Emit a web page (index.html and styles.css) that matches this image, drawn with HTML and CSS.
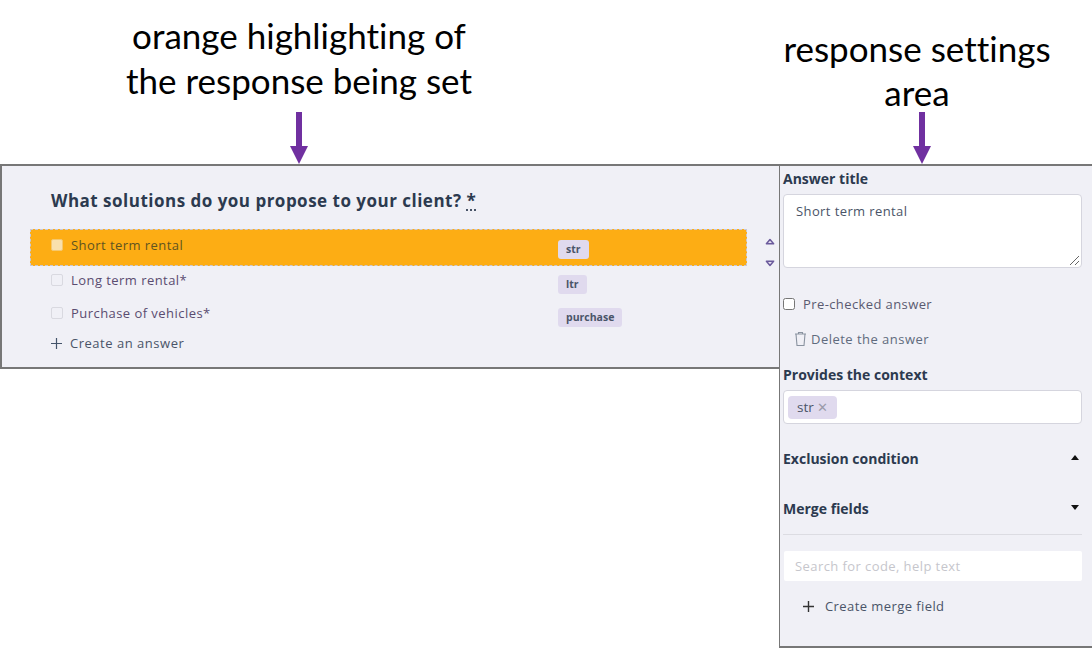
FILE: index.html
```html
<!DOCTYPE html>
<html lang="en">
<head>
<meta charset="utf-8">
<title>Response settings</title>
<link rel="stylesheet" href="styles.css">
</head>
<body>
<div class="page">
  <header class="notes">
    <div class="note note-left">
      <p class="note-text">orange highlighting of<br>the response being set</p>
      <svg class="arrow" width="18" height="52" viewBox="0 0 18 52"><path d="M6 0h6v34h6l-9 18-9-18h6z" fill="#7030a0"/></svg>
    </div>
    <div class="note note-right">
      <p class="note-text">response settings<br>area</p>
      <svg class="arrow" width="18" height="52" viewBox="0 0 18 52"><path d="M6 0h6v34h6l-9 18-9-18h6z" fill="#7030a0"/></svg>
    </div>
  </header>
  <main class="panels">
    <section class="question">
      <h1 class="q-title">What solutions do you propose to your client? <span class="req">*</span></h1>
      <div class="answers">
        <div class="answer answer-active">
          <span class="box"></span><span class="answer-label">Short term rental</span>
          <span class="tag">str</span>
        </div>
        <div class="answer answer-2">
          <span class="box"></span><span class="answer-label">Long term rental*</span>
          <span class="tag">ltr</span>
        </div>
        <div class="answer answer-3">
          <span class="box"></span><span class="answer-label">Purchase of vehicles*</span>
          <span class="tag">purchase</span>
        </div>
        <div class="movers">
          <svg width="10" height="7" viewBox="0 0 10 7"><path d="M5 1.5 8.6 5.8H1.4z" fill="#e6e2f0" stroke="#6b5a9c" stroke-width="1.5" stroke-linejoin="round"/></svg>
          <svg width="10" height="7" viewBox="0 0 10 7"><path d="M5 5.5 8.6 1.2H1.4z" fill="#e6e2f0" stroke="#6b5a9c" stroke-width="1.5" stroke-linejoin="round"/></svg>
        </div>
      </div>
      <div class="create">
        <svg width="11" height="11" viewBox="0 0 11 11"><path d="M5.5 0v11M0 5.5h11" stroke="#44546a" stroke-width="1.2"/></svg>
        <span>Create an answer</span>
      </div>
    </section>
    <aside class="settings">
      <h2 class="s-label">Answer title</h2>
      <div class="textarea">
        <span>Short term rental</span>
        <svg class="grip" width="11" height="11" viewBox="0 0 11 11"><path d="M1 10 10 1M6 10l4-4" stroke="#666" stroke-width="1"/></svg>
      </div>
      <label class="prechecked"><span class="s-box"></span>Pre-checked answer</label>
      <div class="delete">
        <svg width="13" height="16" viewBox="0 0 13 16"><path d="M1 3h11M4.5 3V1.5h4V3M2 3l1 11.5h7L11 3" fill="none" stroke="#8a93a0" stroke-width="1.1"/></svg>
        <span>Delete the answer</span>
      </div>
      <h2 class="s-label context-label">Provides the context</h2>
      <div class="chips"><span class="chip">str <span class="chip-x">✕</span></span></div>
      <div class="collapse exclusion"><h2 class="s-label">Exclusion condition</h2><span class="caret caret-up"></span></div>
      <div class="collapse merge"><h2 class="s-label">Merge fields</h2><span class="caret caret-down"></span></div>
      <div class="search">Search for code, help text</div>
      <div class="create-merge">
        <svg width="11" height="11" viewBox="0 0 11 11"><path d="M5.5 0v11M0 5.5h11" stroke="#333" stroke-width="1.4"/></svg>
        <span>Create merge field</span>
      </div>
    </aside>
  </main>
</div>
</body>
</html>
```
FILE: styles.css
```css
* { box-sizing: border-box; }
html, body { margin: 0; padding: 0; background: #fff; }
.page { width: 1092px; height: 648px; overflow: hidden; font-family: "Open Sans", sans-serif; color: #4a5468; }
p, h1, h2 { margin: 0; }

.notes { display: flex; height: 164px; }
.note { display: flex; flex-direction: column; align-items: center; font-family: Lato, sans-serif; font-variant-ligatures: none; color: #000; font-size: 35px; text-align: center; }
.note-left { width: 598px; padding-top: 13px; }
.note-right { width: 494px; padding-top: 26px; }
.note-text { line-height: 45px; white-space: nowrap; }
.note-left .arrow { margin-top: 9px; }
.note-right .note-text { line-height: 44px; margin-left: 144px; }
.note-right .arrow { margin-top: -2px; margin-left: 154px; }

.panels { display: flex; align-items: flex-start; }
.question { width: 779px; height: 205px; background: #f0f0f6; border: 2px solid #777; border-right: 0; padding-top: 24px; }
.q-title { margin-left: 49px; font-size: 17px; line-height: 22px; font-weight: 700; letter-spacing: 0.49px; color: #2c3a4f; white-space: nowrap; }
.req { text-decoration: underline dotted; text-underline-offset: 3px; }

.answers { position: relative; margin-top: 17px; }
.answer { display: flex; align-items: center; padding-left: 21px; font-size: 13px; margin-left: 28px; width: 717px; }
.answer-active { height: 37px; background: #fdad14; outline: 1px dashed #c9c9d6; outline-offset: -1px; }
.answer-2 { height: 34px; }
.answer-3 { height: 32px; }
.box { width: 12px; height: 12px; flex: none; background: #f0f0f6; border: 1px solid #d9d9e0; border-radius: 2px; margin-right: 8px; position: relative; top: -3px; }
.answer-active .box { background: #f9e0ad; border-color: #f5c86e; }
.answer-label { flex: none; width: 487px; letter-spacing: 0.45px; position: relative; top: -3px; white-space: nowrap; }
.answer-active .answer-label { color: #5f5420; }
.answer-2 .answer-label, .answer-3 .answer-label { color: #5a4c70; }
.tag { background: #e0daee; border-radius: 3px; padding: 0 8px; height: 19px; line-height: 19px; font-size: 10.5px; font-weight: 700; color: #4a5468; position: relative; top: 1px; }
.answer-active .tag { top: 2px; }
.movers { position: absolute; left: 763px; top: 9px; display: flex; flex-direction: column; gap: 15px; }
.movers svg { display: block; }

.create { display: flex; align-items: center; gap: 8px; margin: 2px 0 0 49px; font-size: 13px; letter-spacing: 0.52px; color: #4a5468; }

.settings { width: 313px; height: 484px; background: #f0f0f6; border: 2px solid #777; border-left-width: 1px; border-right: 0; padding: 4px 10px 0 3px; }
.s-label { font-size: 14px; line-height: 18px; font-weight: 700; color: #2c3a4f; white-space: nowrap; }
.textarea { position: relative; height: 74px; margin-top: 6px; background: #fff; border: 1px solid #d5d5de; border-radius: 4px; padding: 7px 12px; font-size: 13px; line-height: 18px; letter-spacing: 0.4px; color: #4a5468; }
.grip { position: absolute; right: 1px; bottom: 1px; }
.prechecked { display: flex; align-items: center; gap: 8px; margin-top: 27px; font-size: 13px; line-height: 18px; letter-spacing: 0.4px; color: #5a5a70; }
.s-box { width: 12px; height: 12px; background: #fff; border: 1px solid #767676; border-radius: 2.5px; }
.delete { display: flex; align-items: center; gap: 4px; margin: 17px 0 0 11px; font-size: 13px; line-height: 18px; letter-spacing: 0.47px; color: #5f6b7d; }
.context-label { margin-top: 18px; }
.chips { height: 34px; margin-top: 6px; background: #fff; border: 1px solid #d5d5de; border-radius: 4px; padding: 4px; }
.chip { display: inline-block; height: 23px; line-height: 22px; padding: 0 9px 0 9px; background: #e0daee; border-radius: 4px; font-size: 13.5px; color: #4a5468; }
.chip-x { color: #9a9aaa; font-size: 12.5px; }
.collapse { display: flex; justify-content: space-between; align-items: center; padding-right: 3px; }
.exclusion { margin-top: 26px; }
.merge { margin-top: 32px; padding-bottom: 16px; border-bottom: 1px solid #dcdce2; }
.caret { width: 0; height: 0; border-left: 4px solid transparent; border-right: 4px solid transparent; position: relative; top: -2px; }
.caret-up { border-bottom: 5px solid #111; }
.caret-down { border-top: 5px solid #111; }
.search { height: 30px; margin: 16px 0 0 1px; background: #fff; border-radius: 2px; padding-left: 11px; font-size: 13px; line-height: 30px; letter-spacing: 0.42px; color: #c6c6cc; }
.create-merge { display: flex; align-items: center; gap: 11px; margin: 16px 0 0 20px; font-size: 13px; line-height: 18px; letter-spacing: 0.42px; color: #4a5468; }
```
